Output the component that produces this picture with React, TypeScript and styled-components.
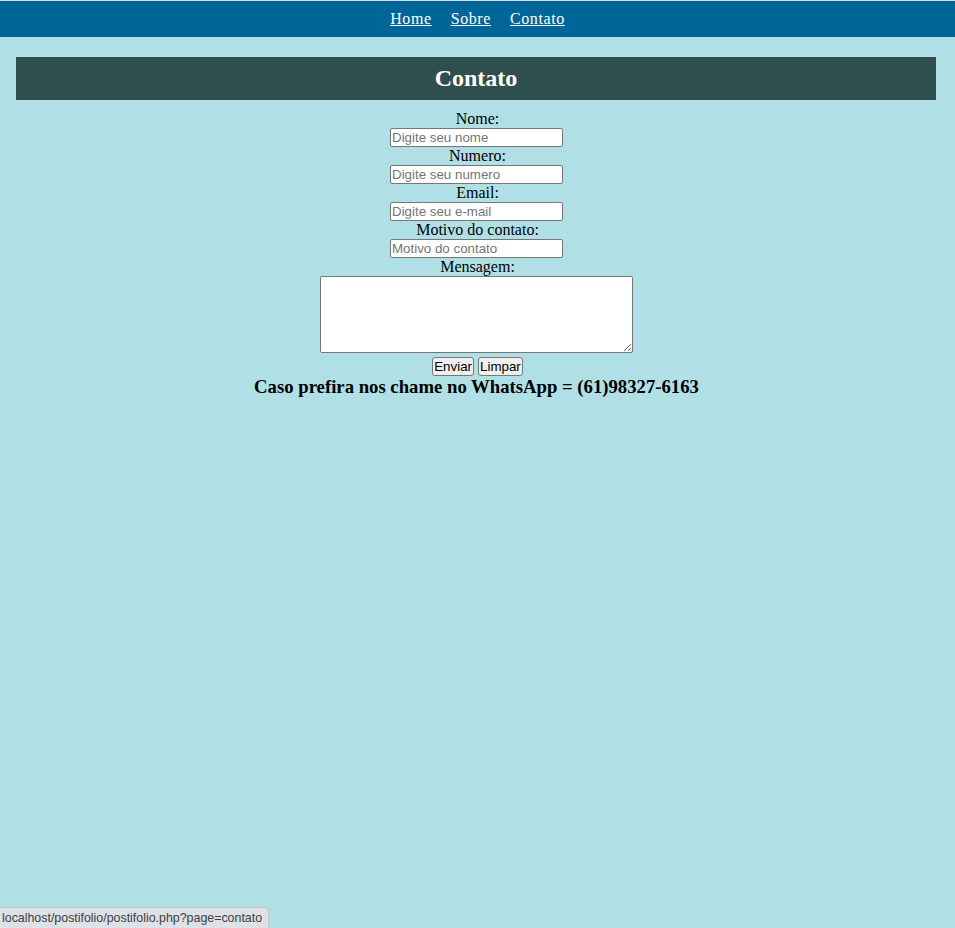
import React from "react";
import styled, { createGlobalStyle } from "styled-components";

const Global = createGlobalStyle`
  html, body { margin: 0; padding: 0; }
  body {
    background: #b0e0e6;
    font-family: "Liberation Serif", "Times New Roman", serif;
    font-size: 16px;
    color: #000;
    min-height: 928px;
    border-top: 1px solid #d9dcdf;
  }
`;

const Nav = styled.nav`
  background: #006699;
  height: 36px;
  display: flex;
  justify-content: center;
  align-items: center;
  gap: 19px;
`;

const NavLink = styled.a`
  color: #fff;
  text-decoration: underline;
  font-size: 16px;
  letter-spacing: 0.6px;
  cursor: pointer;
`;

const Header = styled.h2`
  margin: 20px 19px 0 16px;
  padding: 8px 0;
  background: #2f4f4f;
  color: #fff;
  text-align: center;
  font-size: 24px;
  font-weight: bold;
  line-height: 27px;
`;

const Form = styled.form`
  display: flex;
  flex-direction: column;
  align-items: center;
  margin-top: 10px;
`;

const Label = styled.label`
  font-size: 16px;
  line-height: 18px;
`;

const Input = styled.input`
  box-sizing: border-box;
  width: 173px;
  height: 19px;
  padding: 1px 1px;
  border: 1px solid #767676;
  border-radius: 2px;
  font-family: "Liberation Sans", Arial, sans-serif;
  font-size: 13.33px;
  background: #fff;
  margin-left: -2px;
  &::placeholder { color: #757575; }
`;

const TextArea = styled.textarea`
  box-sizing: border-box;
  width: 313px;
  height: 77px;
  margin-left: -2px;
  border: 1px solid #767676;
  border-radius: 2px;
  background: #fff;
  font-family: "Liberation Mono", monospace;
  font-size: 13.33px;
`;

const Buttons = styled.div`
  display: flex;
  gap: 4px;
  margin-top: 4px;
`;

const Button = styled.button`
  box-sizing: border-box;
  height: 19px;
  padding: 0 1px;
  background: #efefef;
  border: 1px solid #767676;
  border-radius: 3px;
  font-family: "Liberation Sans", Arial, sans-serif;
  font-size: 13.33px;
  line-height: 15px;
  color: #000;
`;

const Whats = styled.h3`
  margin: 0 0 0 -2px;
  font-size: 18.72px;
  font-weight: bold;
  line-height: 21px;
  text-align: center;
`;

const Status = styled.div`
  position: fixed;
  left: 0;
  bottom: 0;
  height: 20px;
  padding: 0 6px 0 2px;
  background: #dee1e6;
  border: 1px solid #c4c7cc;
  border-left: none;
  border-bottom: none;
  border-top-right-radius: 4px;
  font-family: "Liberation Sans", Arial, sans-serif;
  font-size: 12.4px;
  line-height: 20px;
  color: #3c4043;
`;

export default function App() {
  const fields = [
    { label: "Nome:", ph: "Digite seu nome" },
    { label: "Numero:", ph: "Digite seu numero" },
    { label: "Email:", ph: "Digite seu e-mail" },
    { label: "Motivo do contato:", ph: "Motivo do contato" },
  ];
  return (
    <>
      <Global />
      <Nav>
        <NavLink>Home</NavLink>
        <NavLink>Sobre</NavLink>
        <NavLink>Contato</NavLink>
      </Nav>
      <Header>Contato</Header>
      <Form onSubmit={(e) => e.preventDefault()}>
        {fields.map((f) => (
          <React.Fragment key={f.label}>
            <Label>{f.label}</Label>
            <Input placeholder={f.ph} />
          </React.Fragment>
        ))}
        <Label>Mensagem:</Label>
        <TextArea />
        <Buttons>
          <Button type="submit">Enviar</Button>
          <Button type="reset">Limpar</Button>
        </Buttons>
        <Whats>Caso prefira nos chame no WhatsApp = (61)98327-6163</Whats>
      </Form>
      <Status>localhost/postifolio/postifolio.php?page=contato</Status>
    </>
  );
}
